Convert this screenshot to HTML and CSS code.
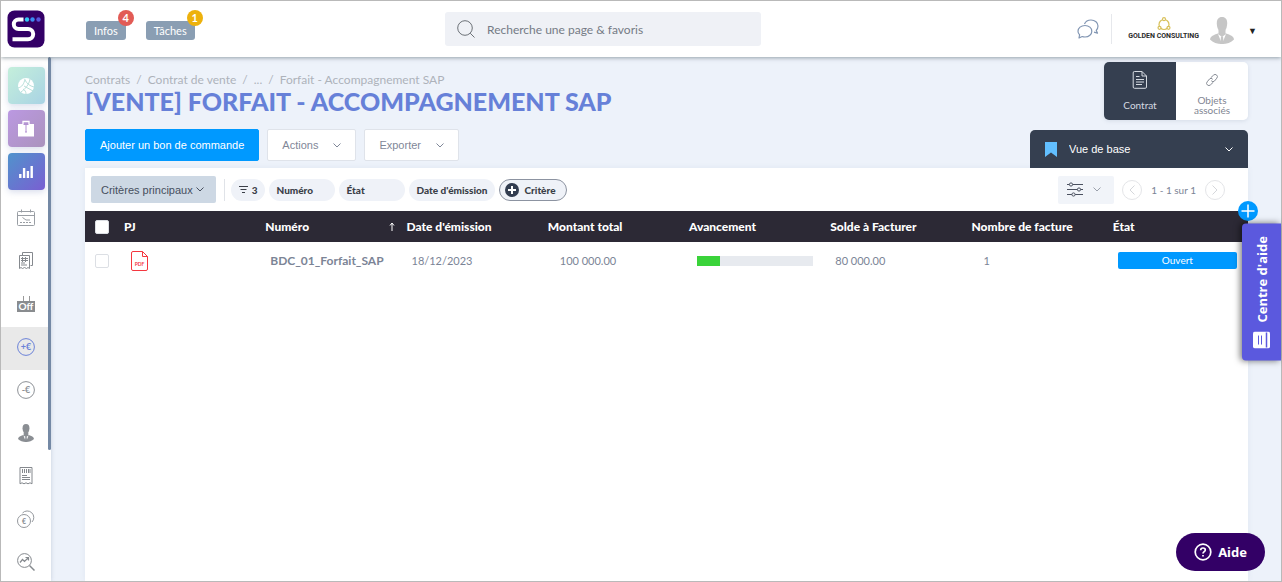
FILE: index.html
```html
<!DOCTYPE html>
<html lang="fr">
<head>
    <meta charset="UTF-8">
    <meta name="viewport" content="width=device-width, initial-scale=1.0">
    <title>Forfait - Accompagnement SAP</title>
    <link rel="stylesheet" href="styles.css">
</head>
<body>
    <header class="topbar">
        <div class="topbar-left">
            <a class="logo" href="#" aria-label="Accueil">
                <svg width="38" height="38" viewBox="0 0 38 38">
                    <rect x="0.5" y="0.5" width="37" height="37" rx="7" fill="#330066"/>
                    <path d="M16.500 9.500h-5a4.700 4.700 0 0 0 0 9.400H21a5.200 5.200 0 0 1 0 10.400H5.500" fill="none" stroke="#fff" stroke-width="4"/>
                    <circle cx="20" cy="9.500" r="2.200" fill="#33c9f5"/>
                    <circle cx="25.500" cy="9.500" r="2.200" fill="#3b8df0"/>
                    <circle cx="31.500" cy="9.500" r="2.200" fill="#5a55dc"/>
                </svg>
            </a>
            <button type="button" class="notif">Infos<span class="badge badge-red">4</span></button>
            <button type="button" class="notif">Tâches<span class="badge badge-yellow">1</span></button>
        </div>
        <label class="search">
            <svg width="18" height="18" viewBox="0 0 18 18" fill="none" stroke="#6c7177">
                <circle cx="8" cy="8" r="7.300"/>
                <path d="M13.200 13.200l4.300 4.300"/>
            </svg>
            <input type="text" placeholder="Recherche une page &amp; favoris" aria-label="Recherche">
        </label>
        <div class="topbar-right">
            <button type="button" class="chat" aria-label="Messages">
                <svg width="22" height="20" viewBox="0 0 22 20" fill="none" stroke="#8296b3" stroke-width="1.200" stroke-linejoin="round">
                    <path d="M8 6.500c4 0 6.800 2.500 6.800 5.700S12 18 8 18c-1 0-2-.2-2.800-.5L2 19l.6-3.200C1.500 14.800 1 13.500 1 12.200 1 9 4 6.500 8 6.500z"/>
                    <path d="M7.500 5C8.500 2.500 11 1 14 1c4 0 7 2.600 7 6 0 1.800-.7 3.200-1.800 4.300l1.300 2.900-3.500-1"/>
                </svg>
            </button>
            <div class="company">
                <svg width="14" height="14" viewBox="0 0 14 14" fill="#fff" stroke="#d8c05a" stroke-width="1.200">
                    <circle cx="7" cy="7.500" r="5"/>
                    <circle cx="7" cy="2.200" r="1.500"/>
                    <circle cx="2.500" cy="10.800" r="1.500"/>
                    <circle cx="11.500" cy="10.800" r="1.500"/>
                </svg>
                <span>GOLDEN CONSULTING</span>
            </div>
            <button type="button" class="user" aria-label="Mon compte">
                <svg width="24" height="27" viewBox="0 0 24 27" fill="#c6c6c6">
                    <path d="M12 0c3.500 0 5.300 2.300 5.200 6.500C17 11.500 15 15 12 15S7 11.500 6.800 6.500C6.700 2.300 8.500 0 12 0z"/>
                    <path d="M8.500 13h7v4l-3.500 3-3.500-3z"/>
                    <path d="M8 16.500C3.500 18 .5 19 0 22.500 3 25.500 7 27 12 27s9-1.500 12-4.500c-.5-3.500-3.500-4.500-8-6z"/>
                    <path d="M8 17l4 10 4-10-4 3z" fill="#fff"/>
                    <path d="M11 19.500h2l.8 7.500h-3.600z"/>
                </svg>
                <span class="caret">▼</span>
            </button>
        </div>
    </header>

    <div class="shell">
        <nav class="sidebar" aria-label="Menu principal">
            <div class="menu">
                <div class="tiles">
                    <a class="tile tile-green" href="#" aria-label="Portail">
                        <svg width="18" height="18" viewBox="0 0 18 18">
                            <circle cx="9" cy="9" r="8" fill="#fff"/>
                            <path d="M1 11c4-1 6-4 7-9M4 15c4-3 8-7 9-13M7 9l9 5M8 3c2 4 5 6 9 7M6 12c2 1 3 3 3 5" fill="none" stroke="#b9e0da"/>
                        </svg>
                    </a>
                    <a class="tile tile-purple" href="#" aria-label="Dossiers">
                        <svg width="18" height="18" viewBox="0 0 18 18">
                            <path d="M1 4h16v12.500H1z" fill="#fff"/>
                            <path d="M6 4V1.500h6V4" fill="none" stroke="#fff" stroke-width="1.300"/>
                            <path d="M6.500 4.500h5M9 4v8M8 12h2" fill="none" stroke="#b391d2"/>
                        </svg>
                    </a>
                    <a class="tile tile-blue" href="#" aria-label="Statistiques">
                        <svg width="14" height="13" viewBox="0 0 14 13" fill="none" stroke="#fff" stroke-width="2.400">
                            <path d="M1.300 13V9M5.100 13V3M8.900 13V6M12.700 13V1"/>
                        </svg>
                    </a>
                </div>
                <a class="item" href="#" aria-label="Agenda">
                    <svg width="18" height="18" viewBox="0 0 18 18" fill="none" stroke="#999ea4">
                        <rect x="0.500" y="2.500" width="17" height="14" rx="1"/>
                        <path d="M.5 6.500h17M4.500.5v3M13.500.5v3M5.500 8.500l3.500 2.500h4"/>
                        <path d="M3 13.500h12" stroke-dasharray="2 1"/>
                    </svg>
                </a>
                <a class="item" href="#" aria-label="Documents">
                    <svg width="18" height="18" viewBox="0 0 18 18" fill="none" stroke="#85898e">
                        <path d="M5.500 3V.500h10v13h-2"/>
                        <path d="M2.500 3.500h10v13l-1.500-1-1.500 1-2-1-2 1-1.500-1-1.500 1z"/>
                        <path d="M4 6.500h7M4 8.500h7M4 11h4M4 13h6M5.500 5v5M8.500 5v5"/>
                    </svg>
                </a>
                <a class="item" href="#" aria-label="Absences">
                    <svg width="18" height="18" viewBox="0 0 18 18">
                        <path d="M6.500 7V1M12.500 7V1" stroke="#999" fill="none"/>
                        <rect y="6" width="18" height="11" fill="#898c8f"/>
                        <text x="9" y="15" text-anchor="middle" class="off-text">Off</text>
                    </svg>
                </a>
                <a class="item item-active" href="#" aria-label="Ventes">
                    <svg width="18" height="18" viewBox="0 0 18 18">
                        <circle cx="9" cy="9" r="8.400" fill="none" stroke="#6b82d8"/>
                        <text x="9" y="12" text-anchor="middle" class="euro-text" fill="#6b82d8">+€</text>
                    </svg>
                </a>
                <a class="item" href="#" aria-label="Achats">
                    <svg width="18" height="18" viewBox="0 0 18 18">
                        <circle cx="9" cy="9" r="8.400" fill="none" stroke="#8d9196"/>
                        <text x="9" y="12" text-anchor="middle" class="euro-text" fill="#8d9196">-€</text>
                    </svg>
                </a>
                <a class="item" href="#" aria-label="Collaborateurs">
                    <svg width="16" height="18" viewBox="0 0 24 27" fill="#8a8e93">
                        <path d="M12 0c3.500 0 5.300 2.300 5.200 6.500C17 11.500 15 15 12 15S7 11.500 6.800 6.500C6.700 2.300 8.500 0 12 0z"/>
                        <path d="M8.500 13h7v4l-3.500 3-3.500-3z"/>
                        <path d="M8 16.500C3.500 18 .5 19 0 22.500 3 25.500 7 27 12 27s9-1.500 12-4.500c-.5-3.500-3.500-4.500-8-6z"/>
                        <path d="M8 17l4 10 4-10-4 3z" fill="#fff"/>
                        <path d="M11 19.500h2l.8 7.500h-3.600z"/>
                    </svg>
                </a>
                <a class="item" href="#" aria-label="Factures">
                    <svg width="18" height="18" viewBox="0 0 18 18" fill="none" stroke="#85898e">
                        <path d="M3 .5h12v16.300l-2-1-2 1-2-1-2 1-2-1-2 1z"/>
                        <path d="M5.500 2v4M7.500 2v4M9.500 2v4M11.500 2v4M13 2v4M5 8.500h5M5 10.500h8M5 12.500h8"/>
                    </svg>
                </a>
                <a class="item" href="#" aria-label="Trésorerie">
                    <svg width="18" height="18" viewBox="0 0 18 18" fill="none" stroke="#94989d">
                        <circle cx="7" cy="11" r="6.500"/>
                        <path d="M5.500 3A6.200 6.200 0 1 1 15 12"/>
                        <text x="7" y="13.500" text-anchor="middle" class="coin-text">€</text>
                    </svg>
                </a>
                <a class="item" href="#" aria-label="Analyses">
                    <svg width="18" height="18" viewBox="0 0 18 18" fill="none" stroke="#85898e">
                        <circle cx="7.500" cy="7.500" r="6.900"/>
                        <path d="M12.500 12.500l5 5" stroke-width="1.500"/>
                        <path d="M3 9.500l2.500-3 2 2L11 5M8.500 4.500H11.500v3" stroke-width="1.200"/>
                    </svg>
                </a>
            </div>
            <div class="thumb"></div>
        </nav>

        <main class="content">
            <div class="page-head">
                <div class="head-left">
                    <nav class="breadcrumb" aria-label="Fil d'Ariane">
                        <a href="#">Contrats</a><span>/</span><a href="#">Contrat de vente</a><span>/</span><a href="#">...</a><span>/</span><a href="#">Forfait - Accompagnement SAP</a>
                    </nav>
                    <h1>[VENTE] FORFAIT - ACCOMPAGNEMENT SAP</h1>
                    <div class="actions">
                        <button type="button" class="btn btn-primary">Ajouter un bon de commande</button>
                        <button type="button" class="btn">Actions
                            <svg class="chevron" viewBox="0 0 8 5"><path d="M.5.5L4 4 7.500.5"/></svg>
                        </button>
                        <button type="button" class="btn">Exporter
                            <svg class="chevron" viewBox="0 0 8 5"><path d="M.5.5L4 4 7.500.5"/></svg>
                        </button>
                    </div>
                </div>
                <div class="head-right">
                    <div class="tabs">
                        <button type="button" class="tab tab-active">
                            <svg width="16" height="18" viewBox="0 0 16 18" fill="none" stroke="#d5dae1">
                                <path d="M2.500.5H10L14.500 5v11a1.300 1.300 0 0 1-1.300 1.300H2.500A1.300 1.300 0 0 1 1.200 16V2A1.300 1.300 0 0 1 2.500.5z"/>
                                <path d="M10 .5V5h4.500M4 5.500h3.500M4 8.500h8M4 11h8M4 13.500h6"/>
                            </svg>
                            Contrat
                        </button>
                        <button type="button" class="tab">
                            <svg width="12" height="12" viewBox="0 0 12 12" fill="none" stroke="#868b94" stroke-linecap="round">
                                <path d="M5 3.500L7.500 1.200a2 2 0 0 1 3.300 3L8.500 7a2 2 0 0 1-3 0"/>
                                <path d="M7 8.500l-2.500 2.300a2 2 0 0 1-3.300-3L3.500 5a2 2 0 0 1 3 0"/>
                            </svg>
                            Objets associés
                        </button>
                    </div>
                    <div class="view">
                        <svg width="12" height="15" viewBox="0 0 12 15"><path d="M0 0h12v15L6 10.500 0 15z" fill="#62bfff"/></svg>
                        <select aria-label="Vue">
                            <option>Vue de base</option>
                        </select>
                        <svg class="chevron" viewBox="0 0 8 5"><path d="M.5.5L4 4 7.500.5"/></svg>
                    </div>
                </div>
            </div>

            <section class="card">
                <button type="button" class="add-column" aria-label="Ajouter une colonne">
                    <svg width="20" height="20" viewBox="0 0 20 20" stroke="#fff" stroke-width="1.500"><path d="M10 3.500v13M3.500 10h13"/></svg>
                </button>
                <div class="toolbar">
                    <button type="button" class="criteria">Critères principaux
                        <svg class="chevron" viewBox="0 0 8 5"><path d="M.5.5L4 4 7.500.5"/></svg>
                    </button>
                    <div class="filters">
                        <button type="button" class="pill pill-count">
                            <svg width="9" height="7" viewBox="0 0 9 7" stroke="#3b3f48"><path d="M0 .5h9M1.500 3.500h6M3 6.500h3"/></svg>
                            3
                        </button>
                        <button type="button" class="pill pill-wide">Numéro</button>
                        <button type="button" class="pill pill-wide">État</button>
                        <button type="button" class="pill">Date d'émission</button>
                        <button type="button" class="pill pill-add">
                            <svg width="14" height="14" viewBox="0 0 14 14"><circle cx="7" cy="7" r="7" fill="#323d50"/><path d="M7 3v8M3 7h8" stroke="#fff" stroke-width="2"/></svg>
                            Critère
                        </button>
                    </div>
                    <button type="button" class="settings" aria-label="Affichage">
                        <svg width="16" height="15" viewBox="0 0 16 15" fill="#f1f4f9" stroke="#4b5160">
                            <path d="M0 2.500h16M0 7.500h16M0 12.500h16"/>
                            <circle cx="4" cy="2.500" r="1.600"/><circle cx="12" cy="7.500" r="1.600"/><circle cx="6.500" cy="12.500" r="1.600"/>
                        </svg>
                        <svg class="chevron" viewBox="0 0 8 5"><path d="M.5.5L4 4 7.500.5"/></svg>
                    </button>
                    <div class="pager">
                        <button type="button" aria-label="Page précédente">
                            <svg width="6" height="10" viewBox="0 0 6 10"><path d="M5.500.5L1 5l4.500 4.500"/></svg>
                        </button>
                        <span>1 - 1 sur 1</span>
                        <button type="button" aria-label="Page suivante">
                            <svg width="6" height="10" viewBox="0 0 6 10"><path d="M.5.5L5 5 .5 9.500"/></svg>
                        </button>
                    </div>
                </div>
                <table>
                    <thead>
                        <tr>
                            <th class="col-check"><input type="checkbox" aria-label="Tout sélectionner"></th>
                            <th>PJ</th>
                            <th>
                                <div class="sorted">Numéro
                                    <svg width="6" height="9" viewBox="0 0 6 9" fill="none" stroke="#fff"><path d="M3 9V1M1 3.500l2-2.500 2 2.500"/></svg>
                                </div>
                            </th>
                            <th>Date d'émission</th>
                            <th>Montant total</th>
                            <th>Avancement</th>
                            <th>Solde à Facturer</th>
                            <th>Nombre de facture</th>
                            <th>État</th>
                        </tr>
                    </thead>
                    <tbody>
                        <tr>
                            <td class="col-check"><input type="checkbox" aria-label="Sélectionner BDC_01_Forfait_SAP"></td>
                            <td>
                                <a class="pdf" href="#" aria-label="Ouvrir le PDF">
                                    <svg width="17" height="20" viewBox="0 0 17 20" fill="none" stroke="#f4373f">
                                        <path d="M2 .5h9.500l5 5V18a1.500 1.500 0 0 1-1.500 1.500H2A1.500 1.500 0 0 1 .5 18V2A1.500 1.500 0 0 1 2 .5zM11.500.5v5h5"/>
                                        <text x="8.500" y="14.500" text-anchor="middle" class="pdf-text">PDF</text>
                                    </svg>
                                </a>
                            </td>
                            <td><a class="order" href="#">BDC_01_Forfait_SAP</a></td>
                            <td>18/12/2023</td>
                            <td class="num">100 000.00</td>
                            <td><div class="progress"><div class="progress-bar" style="width: 20%"></div></div></td>
                            <td>80 000.00</td>
                            <td class="num">1</td>
                            <td><span class="status">Ouvert</span></td>
                        </tr>
                    </tbody>
                </table>
            </section>
        </main>
    </div>

    <button type="button" class="help-center">
        <svg width="17" height="17" viewBox="0 0 17 17">
            <rect width="17" height="17" rx="2" fill="#fff"/>
            <path d="M3.500 1v15" stroke="#5b59de" stroke-width="1.500"/>
            <path d="M8.500 4v9M11.500 4v9" stroke="#5b59de"/>
        </svg>
        Centre d'aide
    </button>
    <button type="button" class="help-chat">
        <svg width="18" height="18" viewBox="0 0 18 18" fill="none" stroke="#fff" stroke-width="1.700">
            <circle cx="9" cy="9" r="7.800"/>
            <path d="M6.700 7.200C6.700 5.700 7.700 5 9 5s2.300.8 2.300 2c0 1.600-2.300 1.800-2.300 3.500M9 12v1.600"/>
        </svg>
        Aide
    </button>
</body>
</html>
```

FILE: styles.css
```css
* {
    box-sizing: border-box;
}

body {
    margin: 0;
    height: 100vh;
    display: flex;
    flex-direction: column;
    border: 1px solid #b9b9b9;
    overflow: hidden;
    background: #edf2fa;
    font-family: Lato, "Liberation Sans", sans-serif;
    font-size: 12px;
    color: #7b8496;
}

button, input, select {
    font-family: inherit;
    font-size: inherit;
    color: inherit;
}

button {
    border: none;
    padding: 0;
    background: none;
    cursor: pointer;
}

a {
    color: inherit;
    text-decoration: none;
}

svg {
    flex: none;
    display: block;
}

.chevron {
    width: 8px;
    height: 5px;
    fill: none;
    stroke: currentColor;
}

/* Top bar */
.topbar {
    flex: none;
    height: 56px;
    display: flex;
    align-items: center;
    padding: 0 24px 0 6px;
    background: #fff;
    box-shadow: 0 1px 4px rgba(60, 80, 90, 0.5);
    z-index: 2;
}

.topbar-left {
    flex: 0 0 438px;
    display: flex;
    align-items: center;
    gap: 20px;
}

.logo {
    margin-right: 21px;
}

.notif {
    position: relative;
    height: 19px;
    margin-top: 3px;
    padding: 0 8px;
    border-radius: 3px;
    background: #8a9eb3;
    color: #fff;
    font-size: 11px;
}

.badge {
    position: absolute;
    top: -11px;
    right: -8px;
    width: 16px;
    height: 16px;
    border-radius: 50%;
    font-weight: 700;
    line-height: 16px;
}

.badge-red {
    background: #e25b55;
}

.badge-yellow {
    background: #edb10c;
}

.search {
    flex: 0 1 316px;
    height: 34px;
    display: flex;
    align-items: center;
    gap: 12px;
    padding: 0 12px;
    border-radius: 3px;
    background: #eff1f6;
}

.search input {
    flex: 1;
    min-width: 0;
    border: none;
    padding: 0;
    background: none;
}

.search input::placeholder {
    color: #757b85;
    opacity: 1;
}

.topbar-right {
    margin-left: auto;
    display: flex;
    align-items: center;
}

.chat {
    padding-right: 12px;
}

.company {
    height: 30px;
    display: flex;
    flex-direction: column;
    align-items: center;
    justify-content: center;
    padding: 0 11px 0 16px;
    border-left: 1px solid #e6e8ec;
    color: #2b2b2b;
    font-family: Roboto, sans-serif;
    font-size: 7px;
    font-weight: 700;
    line-height: 10px;
}

.user {
    display: flex;
    align-items: center;
    gap: 14px;
    padding-top: 3px;
}

.caret {
    color: #222;
    font-size: 9px;
}

/* Sidebar */
.shell {
    flex: 1;
    min-height: 0;
    display: flex;
}

.sidebar {
    flex: none;
    width: 50px;
    display: flex;
    overflow: hidden;
    background: #fff;
    box-shadow: 0 0 4px rgba(80, 100, 130, 0.25);
}

.menu {
    flex: 1;
}

.thumb {
    width: 3px;
    height: 75%;
    border-radius: 2px;
    background: #7489a5;
}

.tiles {
    display: flex;
    flex-direction: column;
    align-items: center;
    gap: 6px;
    padding: 10px 0 8px 3px;
}

.tile {
    width: 37px;
    height: 37px;
    display: flex;
    align-items: center;
    justify-content: center;
    border-radius: 4px;
    box-shadow: 0 2px 6px rgba(100, 120, 180, 0.25);
}

.tile-green {
    background: linear-gradient(135deg, #c4efdb, #a9d3e4);
}

.tile-purple {
    background: linear-gradient(135deg, #bb98e2, #ab93bd);
}

.tile-blue {
    background: linear-gradient(135deg, #5093cc, #7a5fd2);
}

.item {
    height: 43px;
    display: flex;
    align-items: center;
    justify-content: center;
    padding: 0 0 4px 3px;
}

.item-active {
    background: #e9e9e9;
}

.off-text {
    font-size: 10px;
    font-weight: 700;
    fill: #fff;
}

.euro-text {
    font-size: 9px;
    font-weight: 700;
}

.coin-text {
    font-size: 7px;
    font-weight: 700;
    fill: #85898e;
    stroke: none;
}

/* Page header */
.content {
    flex: 1;
    min-width: 0;
    display: flex;
    flex-direction: column;
    padding: 0 33px 0 34px;
}

.page-head {
    display: flex;
    justify-content: space-between;
    padding-top: 5px;
}

.head-left {
    padding-top: 10px;
}

.breadcrumb {
    color: #adb2ba;
    line-height: 16px;
}

.breadcrumb span {
    margin: 0 6px;
}

h1 {
    margin: 0;
    color: #6680d8;
    font-size: 25px;
    font-weight: 900;
    line-height: 26px;
}

.actions {
    display: flex;
    gap: 8px;
    padding-top: 15px;
}

.btn {
    height: 32px;
    display: flex;
    align-items: center;
    gap: 15px;
    padding: 0 14px;
    border: 1px solid #dfe3ea;
    border-radius: 2px;
    background: #fff;
    color: #7f8798;
    font-family: "Liberation Sans", Arial, sans-serif;
    font-size: 11px;
}

.btn-primary {
    border-color: #0099ff;
    background: #0099ff;
    color: #fff;
}

.head-right {
    width: 218px;
    display: flex;
    flex-direction: column;
    align-items: flex-end;
    gap: 10px;
}

.tabs {
    display: flex;
    border-radius: 5px;
    overflow: hidden;
    box-shadow: 0 1px 4px rgba(80, 100, 130, 0.15);
}

.tab {
    width: 72px;
    height: 58px;
    display: flex;
    flex-direction: column;
    align-items: center;
    justify-content: flex-end;
    gap: 9px;
    padding: 0 10px 5px;
    background: #fff;
    color: #7f8592;
    font-size: 10px;
    line-height: 10px;
}

.tab-active {
    gap: 11px;
    padding-bottom: 10px;
    background: #353f50;
    color: #d5dae1;
}

.view {
    width: 100%;
    height: 38px;
    display: flex;
    align-items: center;
    gap: 12px;
    padding: 0 15px;
    border-radius: 5px 5px 0 0;
    background: #353f50;
    color: #fff;
}

.view select {
    flex: 1;
    appearance: none;
    border: none;
    padding: 0;
    background: #353f50;
    font-family: "Liberation Sans", Arial, sans-serif;
    font-size: 11px;
}

/* List */
.card {
    flex: 1;
    position: relative;
    background: #fff;
    box-shadow: 0 0 6px rgba(80, 100, 130, 0.08);
}

.add-column {
    position: absolute;
    top: 33px;
    right: -10px;
    border-radius: 50%;
    background: #0099ff;
}

.toolbar {
    height: 43px;
    display: flex;
    align-items: center;
    padding: 0 23px 0 6px;
}

.criteria {
    height: 27px;
    display: flex;
    align-items: center;
    gap: 3px;
    padding: 0 12px 0 10px;
    border-radius: 2px;
    background: #cdd8e4;
    color: #474f5e;
    font-family: "Liberation Sans", Arial, sans-serif;
    font-size: 11px;
}

.filters {
    display: flex;
    gap: 4px;
    margin-left: 8px;
    padding-left: 6px;
    border-left: 1px solid #e0e3e8;
}

.pill {
    height: 22px;
    display: flex;
    align-items: center;
    padding: 0 8px;
    border-radius: 11px;
    background: #eff2f8;
    color: #3b3f48;
    font-size: 10px;
    font-weight: 900;
}

.pill-count {
    gap: 4px;
    padding: 0 7px 0 8px;
}

.pill-wide {
    width: 66px;
}

.pill-add {
    gap: 5px;
    padding: 0 10px 0 5px;
    border: 1px solid #8c93a1;
}

.settings {
    height: 28px;
    display: flex;
    align-items: center;
    gap: 10px;
    margin-left: auto;
    padding: 0 13px 0 9px;
    border-radius: 2px;
    background: #f1f4f9;
    color: #9aa0ab;
}

.pager {
    display: flex;
    align-items: center;
    gap: 9px;
    margin-left: 8px;
    font-size: 10px;
}

.pager button {
    width: 20px;
    height: 20px;
    display: flex;
    align-items: center;
    justify-content: center;
    border: 1px solid #e4e5e8;
    border-radius: 50%;
}

.pager path {
    fill: none;
    stroke: #d5d7db;
}

table {
    width: 100%;
    table-layout: fixed;
    border-collapse: collapse;
}

th {
    height: 31px;
    padding: 0 6px;
    background: #2c2935;
    color: #fff;
    font-size: 12px;
    font-weight: 900;
    text-align: left;
    white-space: nowrap;
}

td {
    height: 37px;
    padding: 0 11px;
    font-size: 11px;
    white-space: nowrap;
}

th.col-check, td.col-check {
    width: 33px;
    padding: 0 0 0 10px;
}

input[type="checkbox"] {
    appearance: none;
    display: block;
    width: 14px;
    height: 14px;
    margin: 0;
    border: 1px solid #dcdfe4;
    border-radius: 2px;
    background: #fff;
}

.sorted {
    display: flex;
    align-items: center;
    justify-content: space-between;
}

td.num {
    padding-left: 18px;
}

.pdf {
    display: block;
    padding-left: 2px;
}

.pdf-text {
    font-size: 5px;
    font-weight: 700;
    fill: #f4373f;
    stroke: none;
}

.order {
    font-size: 12px;
    font-weight: 700;
}

.progress {
    height: 10px;
    margin-left: 3px;
    background: #e7eaef;
}

.progress-bar {
    height: 100%;
    background: #3ad33a;
}

.status {
    display: block;
    height: 17px;
    border-radius: 2px;
    background: #0099ff;
    color: #fff;
    font-size: 10px;
    line-height: 16px;
    text-align: center;
}

/* Floating help */
.help-center {
    position: absolute;
    top: 224px;
    right: 1px;
    width: 39px;
    display: flex;
    align-items: center;
    gap: 9px;
    padding: 12px 0;
    border-radius: 0 4px 4px 0;
    background: #5b59de;
    box-shadow: 2px 0 6px rgba(0, 0, 0, 0.5);
    color: #fff;
    font-family: "Open Sans", sans-serif;
    font-size: 13px;
    font-weight: 700;
    writing-mode: vertical-rl;
    transform: rotate(180deg);
}

.help-chat {
    position: absolute;
    right: 17px;
    bottom: 11px;
    height: 38px;
    display: flex;
    align-items: center;
    gap: 6px;
    padding: 0 18px;
    border-radius: 19px;
    background: #330066;
    color: #fff;
    font-family: "Noto Sans", sans-serif;
    font-size: 13px;
    font-weight: 700;
}
```
